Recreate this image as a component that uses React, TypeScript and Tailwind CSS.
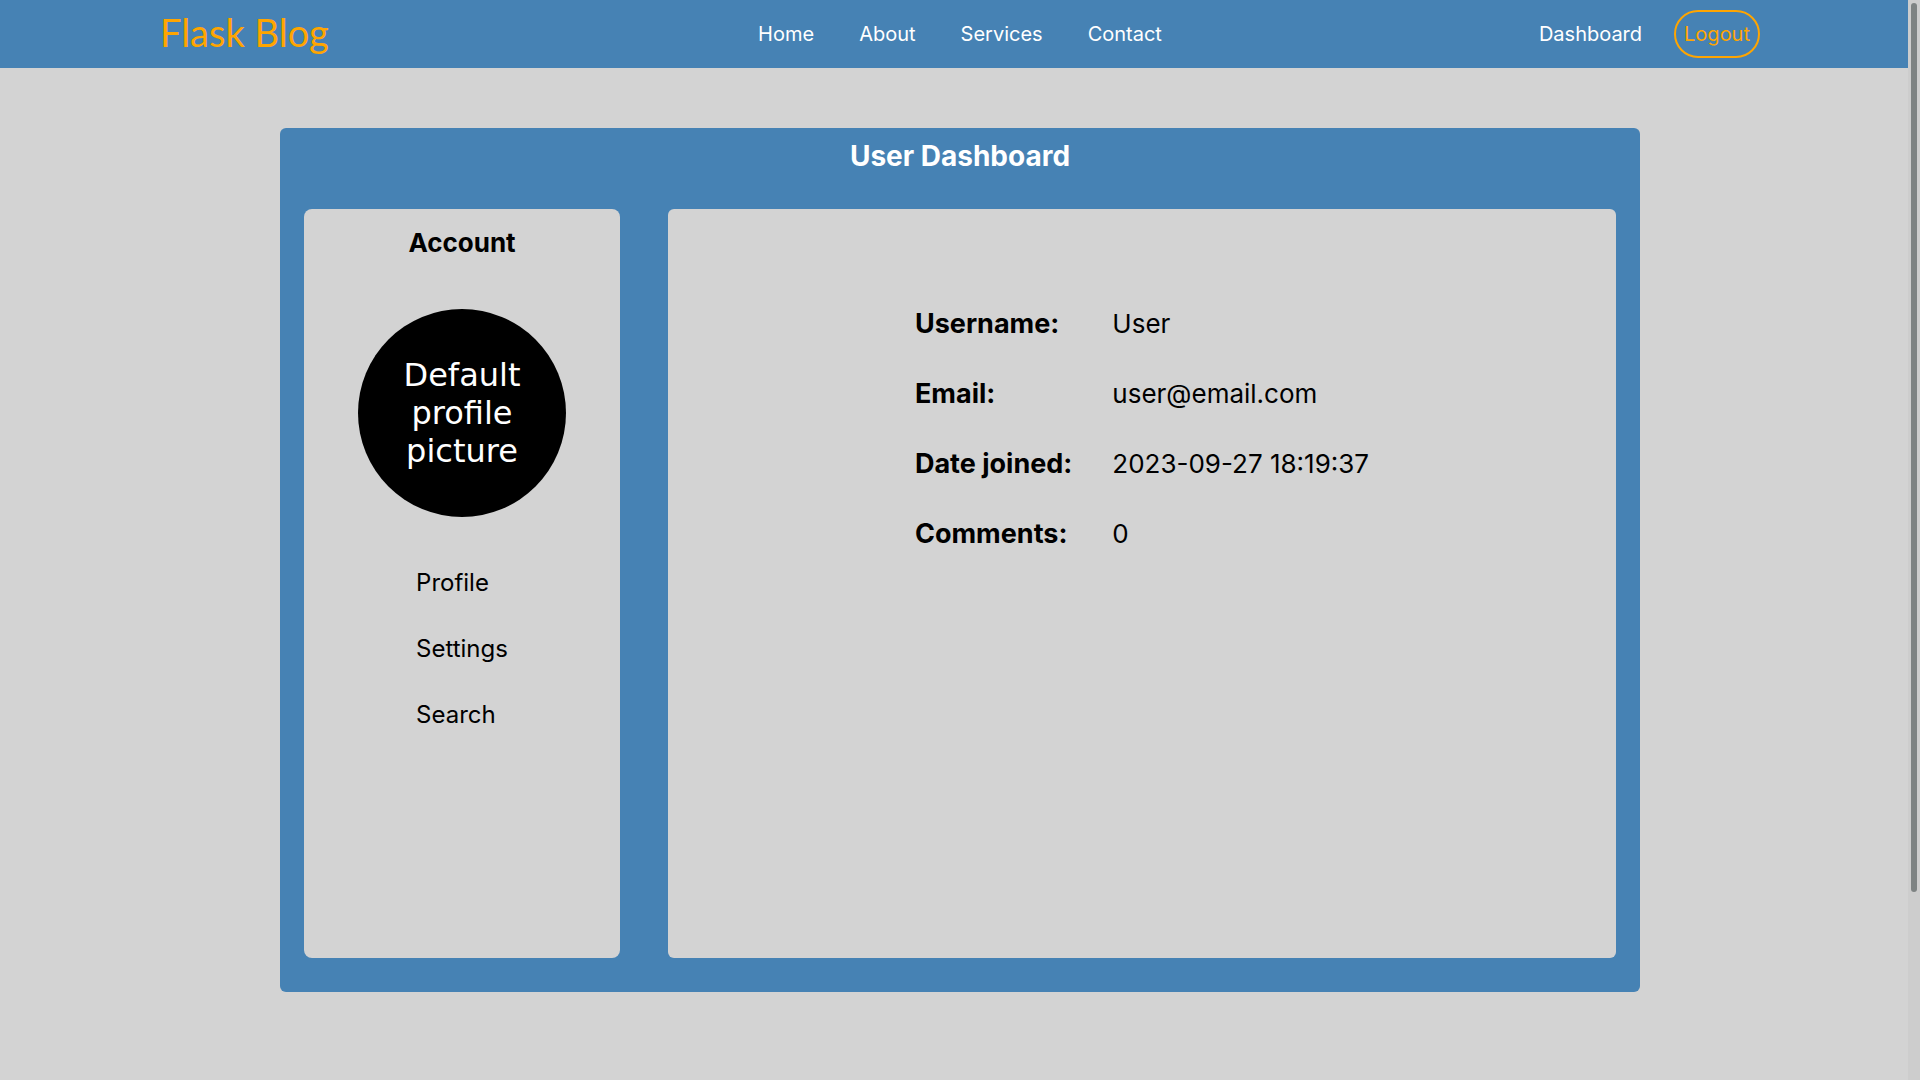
const navLinks = ["Home", "About", "Services", "Contact"];
const accountLinks = ["Profile", "Settings", "Search"];
const details = [
  { label: "Username:", value: "User" },
  { label: "Email:", value: "user@email.com" },
  { label: "Date joined:", value: "2023-09-27 18:19:37" },
  { label: "Comments:", value: "0" },
];

function Header() {
  return (
    <header className="grid h-[68px] grid-cols-[1fr_auto_1fr] items-center bg-[#4682b4] px-40 text-xl text-white">
      <a href="#" className="justify-self-start whitespace-nowrap pb-1 font-['Lato',sans-serif] text-[38px] leading-10 text-[orange]">
        Flask Blog
      </a>
      <nav aria-label="Main" className="flex gap-[45px]">
        {navLinks.map((name) => (
          <a key={name} href="#">{name}</a>
        ))}
      </nav>
      <div className="flex items-center gap-8 justify-self-end">
        <a href="#">Dashboard</a>
        <a href="#" className="rounded-3xl border-2 border-[orange] px-2 py-2 text-[orange]">Logout</a>
      </div>
    </header>
  );
}

function AccountPanel() {
  return (
    <aside className="flex flex-col items-center rounded-lg bg-[#d3d3d3] pt-4">
      <h2 className="text-[26px] leading-9 font-bold">Account</h2>
      <div
        role="img"
        aria-label="Default profile picture"
        className="mt-12 flex size-52 items-center justify-center rounded-full bg-black text-center font-['DejaVu_Sans',sans-serif] text-[32px] leading-[38px] text-white"
      >
        Default
        <br />
        profile
        <br />
        picture
      </div>
      <nav aria-label="Account" className="mt-12 flex flex-col gap-[30px] text-2xl leading-9">
        {accountLinks.map((name) => (
          <a key={name} href="#">{name}</a>
        ))}
      </nav>
    </aside>
  );
}

function ProfileDetails() {
  return (
    <section className="flex justify-center rounded-md bg-[#d3d3d3] pt-[95px]">
      <dl className="grid auto-rows-min grid-cols-[auto_auto] gap-x-10 gap-y-[30px] text-[26px] leading-10">
        {details.map(({ label, value }) => (
          <div key={label} className="contents">
            <dt className="text-[27px] font-bold">{label}</dt>
            <dd>{value}</dd>
          </div>
        ))}
      </dl>
    </section>
  );
}

export default function App() {
  return (
    <div className="min-h-screen bg-[#d3d3d3] pb-[88px] font-['Inter',sans-serif] text-black">
      <Header />
      <main className="mx-auto mt-[60px] flex min-h-[864px] w-full max-w-[1360px] flex-col rounded-md bg-[#4682b4] px-6 pt-2 pb-[34px]">
        <h1 className="text-center text-[28px] leading-10 font-bold text-white">User Dashboard</h1>
        <div className="mt-[33px] grid grow grid-cols-[1fr_3fr] gap-12">
          <AccountPanel />
          <ProfileDetails />
        </div>
      </main>
      <div aria-hidden="true" className="fixed inset-y-0 right-0 w-3 bg-[#cdcdcd] px-[3px] pt-[3px]">
        <div className="h-[82.5%] rounded-full bg-[#7e8383]" />
      </div>
    </div>
  );
}
